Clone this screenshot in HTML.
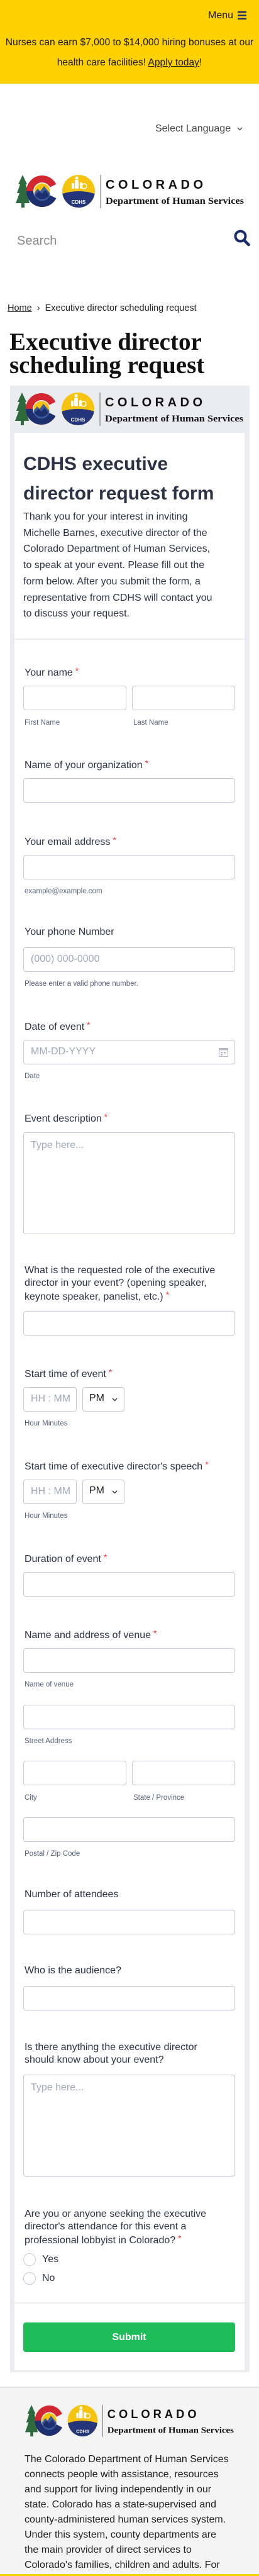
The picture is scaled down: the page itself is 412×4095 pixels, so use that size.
<!DOCTYPE html>
<html><head><meta charset="utf-8">
<style>
*{margin:0;padding:0;box-sizing:border-box}
body{width:412px;height:4095px;position:relative;background:#fff;font-family:"Liberation Sans",Arial,sans-serif;overflow:hidden}
.a{position:absolute}
.lb{position:absolute;left:39px;font-size:16px;line-height:20px;color:#2c3345;white-space:nowrap;font-weight:500}
.lb i,.req{color:#f23a3c;font-style:normal;font-size:14px;vertical-align:3px;margin-left:4px}
.sl{position:absolute;left:39px;font-size:11.5px;line-height:14px;color:#57647e;white-space:nowrap}
.in{position:absolute;left:37px;width:337px;height:39px;border:1px solid #c3cad8;border-radius:4px;background:#fff}
.ph{position:absolute;font-size:16px;color:#a2a9b8;white-space:nowrap}
.logo{position:absolute}
</style></head><body>

<!-- banner -->
<div class="a" style="left:0;top:0;width:412px;height:133px;background:#ffd100"></div>
<div class="a" style="left:331px;top:15px;font-size:16px;line-height:20px;color:#1a1a2e">Menu</div>
<svg class="a" style="left:378px;top:18px" width="14" height="13" viewBox="0 0 14 13"><rect x="0" y="0" width="14" height="2.4" fill="#1b2a5e"/><rect x="0" y="5.3" width="14" height="2.4" fill="#1b2a5e"/><rect x="0" y="10.6" width="14" height="2.4" fill="#1b2a5e"/></svg>
<div class="a" style="left:0;top:52px;width:412px;text-align:center;font-size:15.6px;line-height:32px;color:#1a1a1a">Nurses can earn $7,000 to $14,000 hiring bonuses at our<br>health care facilities! <span style="text-decoration:underline">Apply today</span>!</div>

<!-- language -->
<div class="a" style="left:247px;top:195px;font-size:16px;line-height:20px;color:#444">Select Language</div>
<svg class="a" style="left:377px;top:202px" width="9" height="6" viewBox="0 0 9 6"><path d="M1 1 L4.5 4.5 L8 1" stroke="#555" stroke-width="1.5" fill="none"/></svg>

<!-- logo template used 3 times -->
<svg class="logo" style="left:25px;top:277px;--bg:#fff" width="363" height="55" viewBox="0 0 363 55">
<polygon points="11,1 4,16 7,16 2,30 6,30 0,46 9,46 9,53 14,53 14,46 22,46 18,30 20,30 16,16 18,16" fill="#2d6a3e"/>
<circle cx="42" cy="27" r="25" fill="#d22630"/>
<path d="M17,27 A25,25 0 0 0 67,27 Z" fill="#1d2f6f"/>
<polygon points="42,27 70,13 70,41" style="fill:var(--bg)"/>
<circle cx="42" cy="27" r="14" style="fill:var(--bg)"/>
<circle cx="42" cy="27" r="12.5" fill="#f4c20d"/>
<path d="M29.5,30 L35,23 L39,27 L45,19 L54.5,30 A12.5,12.5 0 0 1 29.5,30 Z" fill="#3a5a9a"/>
<path d="M31,33 L37,27 L42,31 L47,25 L53,33 A12.5,12.5 0 0 1 31,33 Z" fill="#1d2f6f"/>
<circle cx="100" cy="27" r="26" fill="#f6c40f"/>
<path d="M74.3,31 Q100,23 125.7,31 A26,26 0 0 1 74.3,31 Z" fill="#25357a"/>
<text x="100" y="47" font-family="Liberation Sans,sans-serif" font-size="8" font-weight="bold" fill="#fff" text-anchor="middle">CDHS</text>
<circle cx="97" cy="6" r="2.5" fill="#fff"/><rect x="94" y="9" width="6" height="14" rx="2" fill="#fff"/>
<rect x="89" y="14" width="4" height="9" rx="1.5" fill="#fff"/><rect x="102" y="13" width="4" height="10" rx="1.5" fill="#fff"/>
<circle cx="109" cy="19" r="4" fill="none" stroke="#fff" stroke-width="1.5"/>
<line x1="135" y1="1" x2="135" y2="54" stroke="#666" stroke-width="1"/>
<text x="143" y="23" font-family="Liberation Sans,sans-serif" font-size="20" font-weight="bold" fill="#111" textLength="155" lengthAdjust="spacing">COLORADO</text>
<text x="143" y="47" font-family="Liberation Serif,serif" font-size="14.5" font-weight="bold" fill="#111" textLength="220" lengthAdjust="spacingAndGlyphs">Department of Human Services</text>
</svg>

<!-- search -->
<div class="a" style="left:27px;top:371px;font-size:20px;line-height:24px;color:#8a8a8a">Search</div>
<svg class="a" style="left:372px;top:365px" width="26" height="27" viewBox="0 0 26 27"><circle cx="10.5" cy="10.5" r="8" stroke="#1b2a6b" stroke-width="4" fill="none"/><line x1="16.5" y1="17" x2="23.5" y2="24" stroke="#1b2a6b" stroke-width="4.5" stroke-linecap="round"/></svg>

<!-- breadcrumb -->
<div class="a" style="left:12px;top:481px;font-size:14.5px;line-height:18px;color:#222;white-space:nowrap"><span style="text-decoration:underline">Home</span> &nbsp;›&nbsp; Executive director scheduling request</div>

<!-- h1 -->
<div class="a" style="left:15px;top:525px;font-family:'Liberation Serif',serif;font-weight:bold;font-size:39px;line-height:37px;color:#111;white-space:nowrap">Executive director<br>scheduling request</div>

<!-- card -->
<div class="a" style="left:16px;top:613px;width:381px;height:3158px;background:#ebecf0"></div>
<svg class="logo" style="left:24px;top:623px;--bg:#ebecf0" width="363" height="55" viewBox="0 0 363 55">
<polygon points="11,1 4,16 7,16 2,30 6,30 0,46 9,46 9,53 14,53 14,46 22,46 18,30 20,30 16,16 18,16" fill="#2d6a3e"/>
<circle cx="42" cy="27" r="25" fill="#d22630"/>
<path d="M17,27 A25,25 0 0 0 67,27 Z" fill="#1d2f6f"/>
<polygon points="42,27 70,13 70,41" style="fill:var(--bg)"/>
<circle cx="42" cy="27" r="14" style="fill:var(--bg)"/>
<circle cx="42" cy="27" r="12.5" fill="#f4c20d"/>
<path d="M29.5,30 L35,23 L39,27 L45,19 L54.5,30 A12.5,12.5 0 0 1 29.5,30 Z" fill="#3a5a9a"/>
<path d="M31,33 L37,27 L42,31 L47,25 L53,33 A12.5,12.5 0 0 1 31,33 Z" fill="#1d2f6f"/>
<circle cx="100" cy="27" r="26" fill="#f6c40f"/>
<path d="M74.3,31 Q100,23 125.7,31 A26,26 0 0 1 74.3,31 Z" fill="#25357a"/>
<text x="100" y="47" font-family="Liberation Sans,sans-serif" font-size="8" font-weight="bold" fill="#fff" text-anchor="middle">CDHS</text>
<circle cx="97" cy="6" r="2.5" fill="#fff"/><rect x="94" y="9" width="6" height="14" rx="2" fill="#fff"/>
<rect x="89" y="14" width="4" height="9" rx="1.5" fill="#fff"/><rect x="102" y="13" width="4" height="10" rx="1.5" fill="#fff"/>
<circle cx="109" cy="19" r="4" fill="none" stroke="#fff" stroke-width="1.5"/>
<line x1="135" y1="1" x2="135" y2="54" stroke="#666" stroke-width="1"/>
<text x="143" y="23" font-family="Liberation Sans,sans-serif" font-size="20" font-weight="bold" fill="#111" textLength="155" lengthAdjust="spacing">COLORADO</text>
<text x="143" y="47" font-family="Liberation Serif,serif" font-size="14.5" font-weight="bold" fill="#111" textLength="220" lengthAdjust="spacingAndGlyphs">Department of Human Services</text>
</svg>
<div class="a" style="left:23px;top:688px;width:366px;height:3080px;background:#fff"></div>

<div class="a" style="left:37px;top:714px;font-size:30px;line-height:47px;font-weight:bold;color:#2c3345;white-space:nowrap">CDHS executive<br>director request form</div>
<div class="a" style="left:37px;top:809px;font-size:16px;line-height:25.7px;color:#2c3345;white-space:nowrap">Thank you for your interest in inviting<br>Michelle Barnes, executive director of the<br>Colorado Department of Human Services,<br>to speak at your event. Please fill out the<br>form below. After you submit the form, a<br>representative from CDHS will contact you<br>to discuss your request.</div>
<div class="a" style="left:23px;top:1015px;width:366px;height:2px;background:#e8ebf2"></div>

<div class="lb" style="top:1056px">Your name<i>*</i></div>
<div class="in" style="top:1090px;width:164px"></div>
<div class="in" style="top:1090px;left:210px;width:164px"></div>
<div class="sl" style="top:1142px">First Name</div>
<div class="sl" style="top:1142px;left:212px">Last Name</div>

<div class="lb" style="top:1203px">Name of your organization<i>*</i></div>
<div class="in" style="top:1237px"></div>

<div class="lb" style="top:1325px">Your email address<i>*</i></div>
<div class="in" style="top:1359px"></div>
<div class="sl" style="top:1410px">example@example.com</div>

<div class="lb" style="top:1472px">Your phone Number</div>
<div class="in" style="top:1506px"></div>
<div class="ph" style="left:49px;top:1516px">(000) 000-0000</div>
<div class="sl" style="top:1557px">Please enter a valid phone number.</div>

<div class="lb" style="top:1619px">Date of event<i>*</i></div>
<div class="in" style="top:1653px"></div>
<div class="ph" style="left:49px;top:1663px">MM-DD-YYYY</div>
<svg class="a" style="left:348px;top:1665px" width="15" height="15" viewBox="0 0 15 15"><rect x="0.5" y="1.5" width="14" height="13" fill="none" stroke="#b5bac6"/><rect x="0.5" y="1.5" width="14" height="3" fill="#b5bac6"/><rect x="3" y="7" width="3" height="2.5" fill="#b5bac6"/><rect x="8" y="7" width="3" height="2.5" fill="#b5bac6"/><rect x="3" y="11" width="3" height="2" fill="#b5bac6"/></svg>
<div class="sl" style="top:1704px">Date</div>

<div class="lb" style="top:1765px">Event description<i>*</i></div>
<div class="in" style="top:1800px;height:162px"></div>
<div class="ph" style="left:49px;top:1812px">Type here...</div>

<div class="lb" style="top:2010px;line-height:19.5px">What is the requested role of the executive<br>director in your event? (opening speaker,<br>keynote speaker, panelist, etc.)<i>*</i></div>
<div class="in" style="top:2084px"></div>

<div class="lb" style="top:2171px">Start time of event<i>*</i></div>
<div class="in" style="top:2205px;width:85px"></div>
<div class="ph" style="left:49px;top:2215px">HH : MM</div>
<div class="in" style="top:2205px;left:131px;width:67px"></div>
<div class="a" style="left:142px;top:2214px;font-size:16px;color:#222">PM</div>
<svg class="a" style="left:178px;top:2222px" width="9" height="6" viewBox="0 0 9 6"><path d="M1 1 L4.5 4.5 L8 1" stroke="#333" stroke-width="1.5" fill="none"/></svg>
<div class="sl" style="top:2256px">Hour Minutes</div>

<div class="lb" style="top:2318px">Start time of executive director's speech<i>*</i></div>
<div class="in" style="top:2352px;width:85px"></div>
<div class="ph" style="left:49px;top:2362px">HH : MM</div>
<div class="in" style="top:2352px;left:131px;width:67px"></div>
<div class="a" style="left:142px;top:2361px;font-size:16px;color:#222">PM</div>
<svg class="a" style="left:178px;top:2369px" width="9" height="6" viewBox="0 0 9 6"><path d="M1 1 L4.5 4.5 L8 1" stroke="#333" stroke-width="1.5" fill="none"/></svg>
<div class="sl" style="top:2403px">Hour Minutes</div>

<div class="lb" style="top:2465px">Duration of event<i>*</i></div>
<div class="in" style="top:2499px"></div>

<div class="lb" style="top:2586px">Name and address of venue<i>*</i></div>
<div class="in" style="top:2620px"></div>
<div class="sl" style="top:2671px">Name of venue</div>
<div class="in" style="top:2710px"></div>
<div class="sl" style="top:2761px">Street Address</div>
<div class="in" style="top:2799px;width:164px"></div>
<div class="in" style="top:2799px;left:210px;width:164px"></div>
<div class="sl" style="top:2851px">City</div>
<div class="sl" style="top:2851px;left:212px">State / Province</div>
<div class="in" style="top:2889px"></div>
<div class="sl" style="top:2940px">Postal / Zip Code</div>

<div class="lb" style="top:3002px">Number of attendees</div>
<div class="in" style="top:3036px"></div>

<div class="lb" style="top:3123px">Who is the audience?</div>
<div class="in" style="top:3157px"></div>

<div class="lb" style="top:3245px;line-height:19.5px">Is there anything the executive director<br>should know about your event?</div>
<div class="in" style="top:3298px;height:162px"></div>
<div class="ph" style="left:49px;top:3310px">Type here...</div>

<div class="lb" style="top:3510px;line-height:19.5px">Are you or anyone seeking the executive<br>director's attendance for this event a<br>professional lobbyist in Colorado?<i>*</i></div>

<div class="a" style="left:37px;top:3582px;width:20px;height:20px;border:1.5px solid #c3cad8;border-radius:50%"></div>
<div class="a" style="left:67px;top:3582px;font-size:16px;line-height:20px;color:#2c3345">Yes</div>
<div class="a" style="left:37px;top:3612px;width:20px;height:20px;border:1.5px solid #c3cad8;border-radius:50%"></div>
<div class="a" style="left:67px;top:3612px;font-size:16px;line-height:20px;color:#2c3345">No</div>

<div class="a" style="left:23px;top:3660px;width:366px;height:2px;background:#eef0f5"></div>
<div class="a" style="left:37px;top:3692px;width:337px;height:47px;background:#1fbc5a;border-radius:4px;color:#fff;font-size:16px;font-weight:bold;text-align:center;line-height:47px">Submit</div>

<!-- footer -->
<div class="a" style="left:0;top:3794px;width:412px;height:300px;background:#f4f4f4;border-top:2px solid #e2e2e2"></div>
<svg class="logo" style="left:40px;top:3822px;--bg:#f4f4f4" width="332" height="53" viewBox="0 0 363 55" preserveAspectRatio="none">
<polygon points="11,1 4,16 7,16 2,30 6,30 0,46 9,46 9,53 14,53 14,46 22,46 18,30 20,30 16,16 18,16" fill="#2d6a3e"/>
<circle cx="42" cy="27" r="25" fill="#d22630"/>
<path d="M17,27 A25,25 0 0 0 67,27 Z" fill="#1d2f6f"/>
<polygon points="42,27 70,13 70,41" style="fill:var(--bg)"/>
<circle cx="42" cy="27" r="14" style="fill:var(--bg)"/>
<circle cx="42" cy="27" r="12.5" fill="#f4c20d"/>
<path d="M29.5,30 L35,23 L39,27 L45,19 L54.5,30 A12.5,12.5 0 0 1 29.5,30 Z" fill="#3a5a9a"/>
<path d="M31,33 L37,27 L42,31 L47,25 L53,33 A12.5,12.5 0 0 1 31,33 Z" fill="#1d2f6f"/>
<circle cx="100" cy="27" r="26" fill="#f6c40f"/>
<path d="M74.3,31 Q100,23 125.7,31 A26,26 0 0 1 74.3,31 Z" fill="#25357a"/>
<text x="100" y="47" font-family="Liberation Sans,sans-serif" font-size="8" font-weight="bold" fill="#fff" text-anchor="middle">CDHS</text>
<circle cx="97" cy="6" r="2.5" fill="#fff"/><rect x="94" y="9" width="6" height="14" rx="2" fill="#fff"/>
<rect x="89" y="14" width="4" height="9" rx="1.5" fill="#fff"/><rect x="102" y="13" width="4" height="10" rx="1.5" fill="#fff"/>
<circle cx="109" cy="19" r="4" fill="none" stroke="#fff" stroke-width="1.5"/>
<line x1="135" y1="1" x2="135" y2="54" stroke="#666" stroke-width="1"/>
<text x="143" y="23" font-family="Liberation Sans,sans-serif" font-size="20" font-weight="bold" fill="#111" textLength="155" lengthAdjust="spacing">COLORADO</text>
<text x="143" y="47" font-family="Liberation Serif,serif" font-size="14.5" font-weight="bold" fill="#111" textLength="220" lengthAdjust="spacingAndGlyphs">Department of Human Services</text>
</svg>
<div class="a" style="left:39px;top:3898px;font-size:16px;line-height:24px;color:#222;white-space:nowrap">The Colorado Department of Human Services<br>connects people with assistance, resources<br>and support for living independently in our<br>state. Colorado has a state-supervised and<br>county-administered human services system.<br>Under this system, county departments are<br>the main provider of direct services to<br>Colorado's families, children and adults. For</div>
<div class="a" style="left:0;top:4092px;width:412px;height:3px;background:#ffd100"></div>
</body></html>
